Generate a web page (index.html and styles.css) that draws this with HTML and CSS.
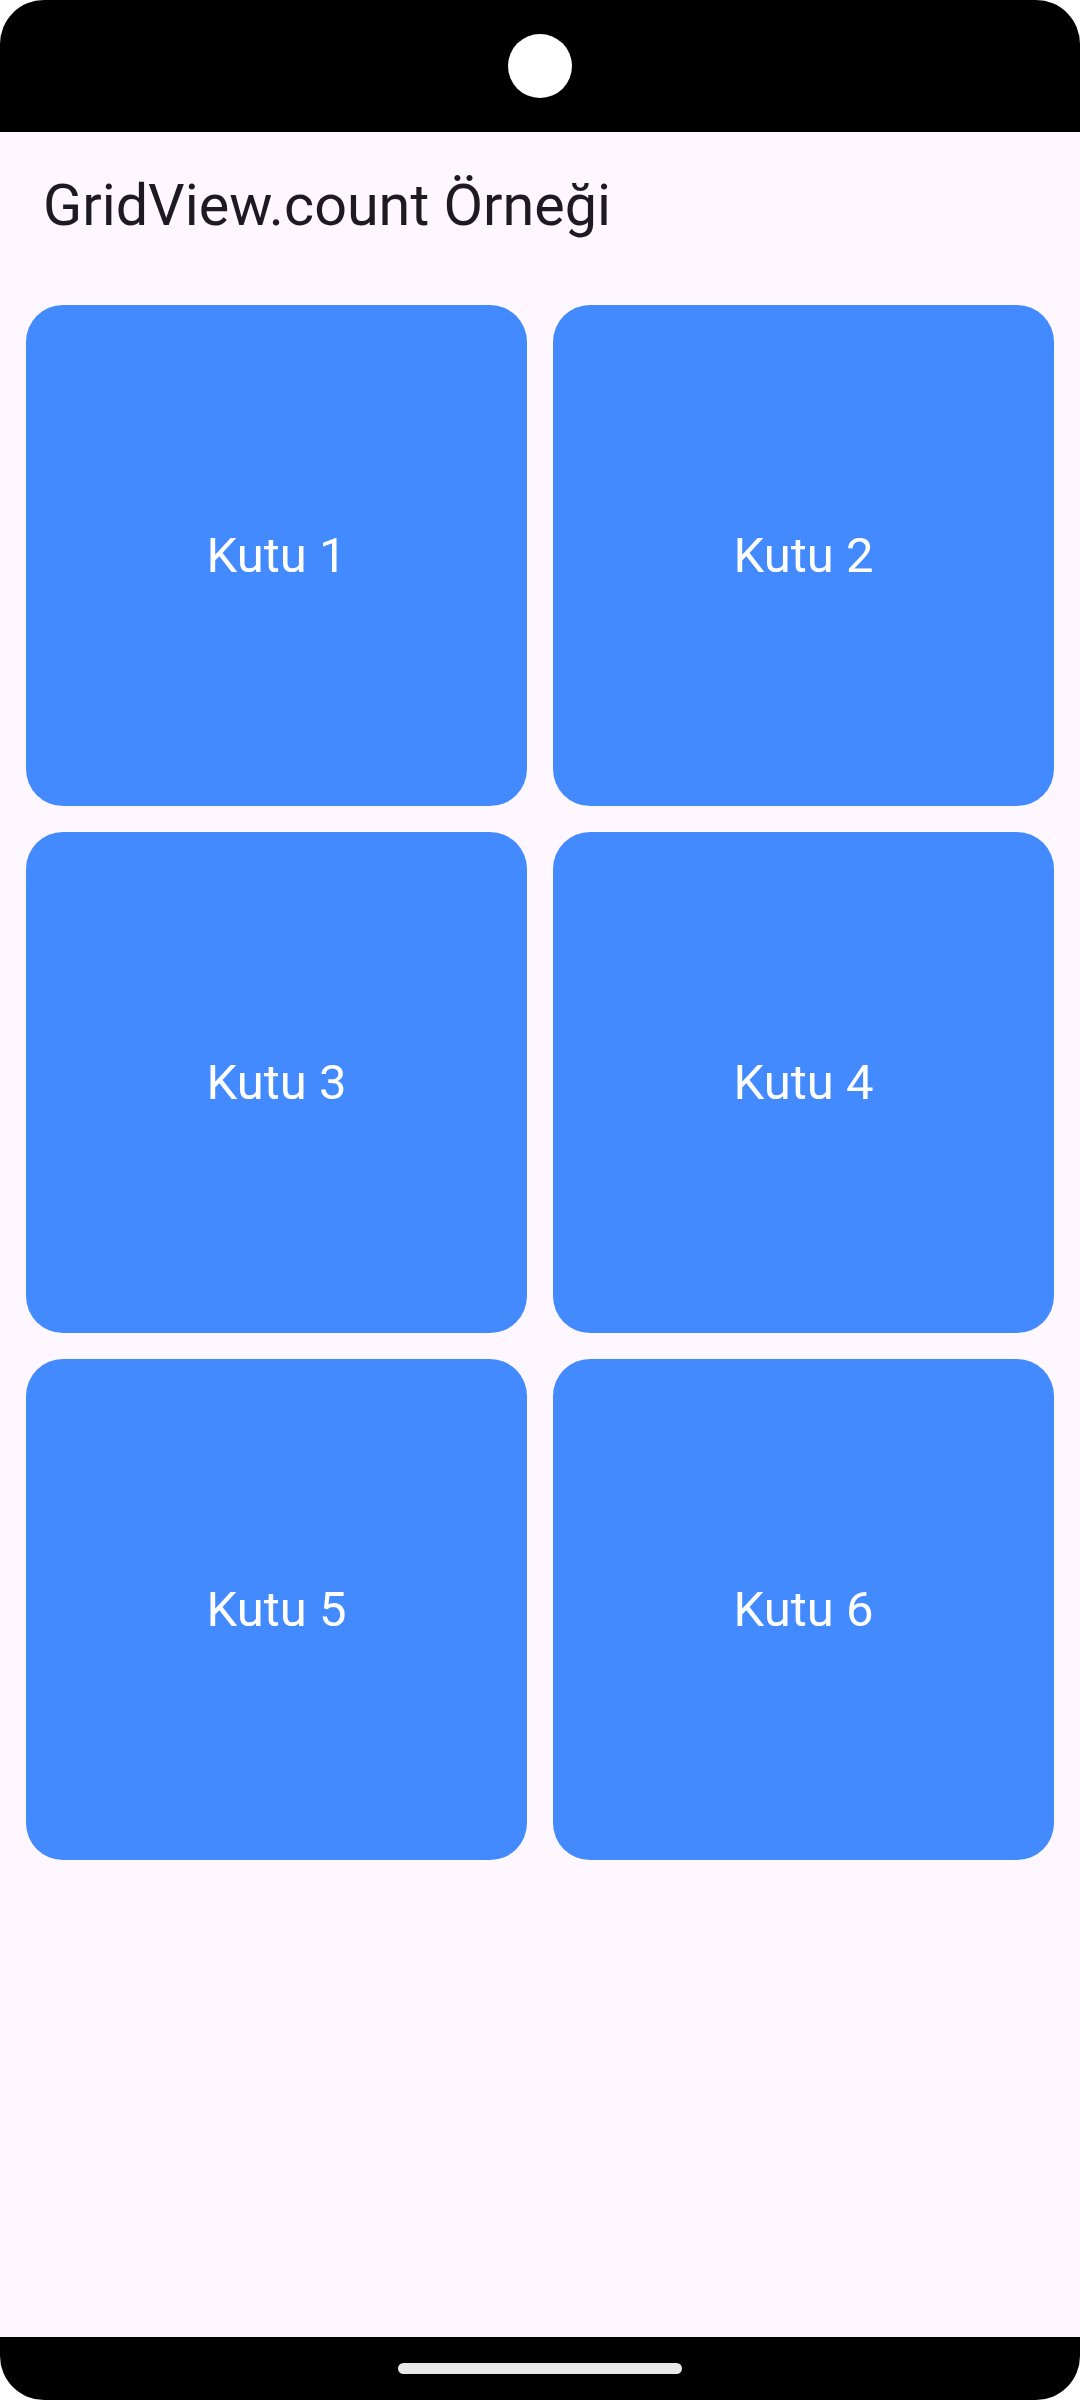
FILE: index.html
```html
<!DOCTYPE html>
<html lang="tr">
<head>
<meta charset="utf-8">
<title>GridView.count Örneği</title>
<link rel="stylesheet" href="styles.css">
</head>
<body>
<div class="phone">
  <div class="status-bar"><div class="camera"></div></div>
  <header class="app-bar"><h1 class="title">GridView.count Örneği</h1></header>
  <main class="content">
    <div class="grid">
      <div class="tile">Kutu 1</div>
      <div class="tile">Kutu 2</div>
      <div class="tile">Kutu 3</div>
      <div class="tile">Kutu 4</div>
      <div class="tile">Kutu 5</div>
      <div class="tile">Kutu 6</div>
    </div>
  </main>
  <div class="nav-bar"><div class="home-indicator"></div></div>
</div>
</body>
</html>
```

FILE: styles.css
```css
html, body {
  margin: 0;
  padding: 0;
  background: #ffffff;
}
body {
  width: 1080px;
  height: 2400px;
  font-family: Roboto, "Noto Sans", "Liberation Sans", sans-serif;
}
.phone {
  width: 1080px;
  height: 2400px;
  display: flex;
  flex-direction: column;
  border-radius: 44px;
  overflow: hidden;
  background: #fef7ff;
}
.status-bar {
  height: 132px;
  flex: 0 0 132px;
  background: #000;
  display: flex;
  align-items: center;
  justify-content: center;
}
.camera {
  width: 64px;
  height: 64px;
  border-radius: 50%;
  background: #fff;
}
.app-bar {
  height: 147px;
  flex: 0 0 147px;
  display: flex;
  align-items: center;
  padding-left: 43px;
  box-sizing: border-box;
}
.title {
  margin: 0;
  font-weight: 400;
  font-size: 57.5px;
  color: #1d1b20;
  line-height: 1;
}
.content {
  flex: 1 1 auto;
  padding: 26px;
}
.grid {
  display: grid;
  grid-template-columns: 1fr 1fr;
  gap: 26px;
}
.tile {
  aspect-ratio: 1 / 1;
  background: #448aff;
  border-radius: 37px;
  color: #fff;
  font-size: 49px;
  display: flex;
  align-items: center;
  justify-content: center;
}
.nav-bar {
  height: 63px;
  flex: 0 0 63px;
  background: #000;
  display: flex;
  justify-content: center;
  padding-top: 26px;
  box-sizing: border-box;
}
.home-indicator {
  width: 284px;
  height: 11px;
  border-radius: 6px;
  background: #e8e8e8;
}
```
